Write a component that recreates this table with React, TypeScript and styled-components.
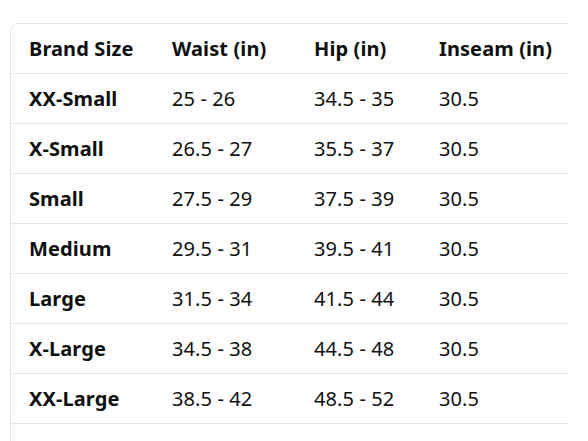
import React from "react";
import styled, { createGlobalStyle } from "styled-components";

const GlobalStyle = createGlobalStyle`
  html, body {
    margin: 0;
    padding: 0;
    background: #ffffff;
    overflow: hidden;
  }
  body {
    font-family: "Noto Sans", "Open Sans", Arial, sans-serif;
    color: #0f1111;
  }
`;

const Page = styled.div`
  padding: 23px 0 0 10px;
  height: 441px;
  box-sizing: border-box;
  overflow: hidden;
`;

const Clip = styled.div`
  width: 559px;
  overflow: hidden;
`;

const Card = styled.div`
  width: 562px;
  border: 1px solid #e3e6e6;
  border-radius: 9px;
  overflow: hidden;
`;

const Table = styled.table`
  width: 100%;
  table-layout: fixed;
  border-collapse: separate;
  border-spacing: 0;
`;

const Cell = styled.td<{ $head?: boolean }>`
  height: 50px;
  padding: 0 0 1px 18px;
  box-sizing: border-box;
  border-bottom: 1px solid #e3e6e6;
  border-right: 1px solid #ffffff;
  font-size: 20px;
  font-weight: ${({ $head }) => ($head ? 700 : 400)};
  letter-spacing: 0.1px;
  text-align: left;
  vertical-align: middle;
  white-space: nowrap;

  &:last-child {
    border-right: none;
  }
`;

const NameCell = styled(Cell)`
  font-weight: 700;
`;

const rows = [
  ["XX-Small", "25 - 26", "34.5 - 35", "30.5"],
  ["X-Small", "26.5 - 27", "35.5 - 37", "30.5"],
  ["Small", "27.5 - 29", "37.5 - 39", "30.5"],
  ["Medium", "29.5 - 31", "39.5 - 41", "30.5"],
  ["Large", "31.5 - 34", "41.5 - 44", "30.5"],
  ["X-Large", "34.5 - 38", "44.5 - 48", "30.5"],
  ["XX-Large", "38.5 - 42", "48.5 - 52", "30.5"],
];

const headers = ["Brand Size", "Waist (in)", "Hip (in)", "Inseam (in)"];

export default function App() {
  return (
    <>
      <GlobalStyle />
      <Page>
        <Clip>
          <Card>
            <Table>
              <colgroup>
                <col style={{ width: 143 }} />
                <col style={{ width: 142 }} />
                <col style={{ width: 125 }} />
                <col />
              </colgroup>
              <thead>
                <tr>
                  {headers.map((h) => (
                    <Cell as="th" $head key={h}>
                      {h}
                    </Cell>
                  ))}
                </tr>
              </thead>
              <tbody>
                {rows.map(([name, waist, hip, inseam]) => (
                  <tr key={name}>
                    <NameCell>{name}</NameCell>
                    <Cell>{waist}</Cell>
                    <Cell>{hip}</Cell>
                    <Cell>{inseam}</Cell>
                  </tr>
                ))}
                {/* next row continues below the fold */}
                <tr>
                  <NameCell />
                  <Cell />
                  <Cell />
                  <Cell />
                </tr>
              </tbody>
            </Table>
          </Card>
        </Clip>
      </Page>
    </>
  );
}
